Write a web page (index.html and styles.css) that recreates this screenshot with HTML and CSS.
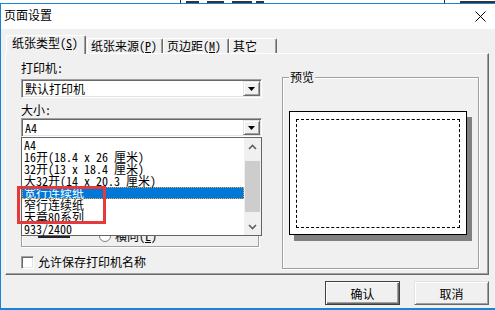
FILE: index.html
```html
<!DOCTYPE html>
<html lang="zh-CN">
<head>
<meta charset="utf-8">
<title>页面设置</title>
<link rel="stylesheet" href="styles.css">
</head>
<body>
<div class="bgstrip">
  <span class="frag f1"></span><span class="frag f2"></span><span class="frag f3"></span><span class="frag f4"></span><span class="frag f5"></span><span class="frag f6"></span><span class="frag f7"></span>
</div>
<div class="window">
  <div class="titlebar">
    <span class="title">页面设置</span>
    <svg class="close" width="11" height="11" viewBox="0 0 11 11"><path d="M0.5 0.5L10.5 10.5M10.5 0.5L0.5 10.5" stroke="#000" stroke-width="1" fill="none"/></svg>
  </div>
  <div class="client">
    <div class="tabs">
      <div class="tab active">纸张类型(<u>S</u>)</div>
      <div class="tab t2">纸张来源(<u>P</u>)</div>
      <div class="tab t3">页边距(<u>M</u>)</div>
      <div class="tab t4">其它</div>
    </div>
    <div class="panel">
      <div class="leftcol">
        <div class="label l1">打印机:</div>
        <div class="combo">
          <span class="combo-text">默认打印机</span>
          <span class="combo-btn"><svg width="7" height="4" viewBox="0 0 7 4"><path d="M0 0H7L3.5 4Z" fill="#000"/></svg></span>
        </div>
        <div class="label l2">大小:</div>
        <div class="combo-wrap">
          <div class="combo">
            <span class="combo-text">A4</span>
            <span class="combo-btn"><svg width="7" height="4" viewBox="0 0 7 4"><path d="M0 0H7L3.5 4Z" fill="#000"/></svg></span>
          </div>
          <div class="droplist">
            <ul class="items">
              <li>A4</li>
              <li>16开(18.4 x 26 厘米)</li>
              <li>32开(13 x 18.4 厘米)</li>
              <li>大32开(14 x 20.3 厘米)</li>
              <li class="sel">宽行连续纸</li>
              <li>窄行连续纸</li>
              <li>天章80系列</li>
              <li>933/2400</li>
            </ul>
            <div class="scrollbar">
              <div class="sb-btn"><svg width="9" height="6" viewBox="0 0 9 6"><path d="M1 5L4.5 1.5L8 5" stroke="#606060" stroke-width="1.6" fill="none"/></svg></div>
              <div class="sb-track"><div class="sb-thumb"></div></div>
              <div class="sb-btn"><svg width="9" height="6" viewBox="0 0 9 6"><path d="M1 1L4.5 4.5L8 1" stroke="#606060" stroke-width="1.6" fill="none"/></svg></div>
            </div>
            <div class="annot"></div>
          </div>
        </div>
        <div class="orient">
          <div class="page-icon"></div>
          <div class="radio-row"><span class="radio"></span><span>横向(<u>L</u>)</span></div>
        </div>
        <div class="check"><span class="box"></span><span>允许保存打印机名称</span></div>
      </div>
      <fieldset class="preview">
        <legend>预览</legend>
        <div class="paper"><div class="margins"></div></div>
      </fieldset>
    </div>
    <div class="buttons">
      <button class="btn default">确认</button>
      <button class="btn">取消</button>
    </div>
  </div>
</div>
</body>
</html>
```

FILE: styles.css
```css
* { box-sizing: border-box; }
html, body { margin: 0; padding: 0; }
body {
  width: 495px;
  height: 310px;
  overflow: hidden;
  background: #fff;
  font-family: "Noto Sans Mono CJK SC", "Noto Sans CJK SC", "DejaVu Sans Mono", monospace;
  font-size: 12px;
  color: #000;
}
u { text-decoration: underline; text-underline-offset: 1px; }

.bgstrip { height: 3px; display: flex; align-items: flex-end; background: #fff; }
.frag { height: 2px; background: #333; }
.f1 { margin-left: 180px; width: 1px; height: 3px; }
.f2 { margin-left: 5px; width: 14px; }
.f3 { margin-left: 8px; width: 18px; }
.f4 { margin-left: 8px; width: 22px; }
.f5 { margin-left: 4px; width: 8px; }
.f6 { margin-left: 180px; width: 1px; height: 3px; }
.f7 { margin-left: 15px; width: 38px; }

.window {
  width: 495px;
  height: 307px;
  border-top: 1px solid #1883d7;
  border-left: 1px solid #1883d7;
  border-bottom: 2px solid #1883d7;
  background: #f0f0f0;
  display: flex;
  flex-direction: column;
}
.titlebar {
  height: 25px;
  flex: none;
  background: #fff;
  display: flex;
  align-items: center;
  justify-content: space-between;
  padding: 0 9px 0 3px;
}
.title {
  font-family: "Noto Sans CJK SC", sans-serif;
  font-size: 12px;
  line-height: 16px;
  margin-top: -3px;
}
.close { display: block; }

.client {
  flex: 1;
  padding: 6px 6px 0 4px;
  display: flex;
  flex-direction: column;
}
.tabs {
  height: 18px;
  display: flex;
  align-items: flex-end;
  padding-left: 1px;
}
.tab {
  height: 15px;
  line-height: 14px;
  padding-left: 3px;
  white-space: nowrap;
  border-top: 1px solid #fff;
  border-left: 1px solid #fff;
  border-right: 1px solid #696969;
  box-shadow: inset -1px 0 0 #a0a0a0;
  border-radius: 2px 2px 0 0;
  background: #f0f0f0;
}
.tab.active {
  width: 80px;
  height: 19px;
  margin-bottom: -1px;
  padding-left: 5px;
  position: relative;
  z-index: 1;
}
.t2 { width: 76px; margin-left: 1px; }
.t3 { width: 66px; }
.t4 { width: 48px; }

.panel {
  width: 484px;
  height: 222px;
  flex: none;
  border-top: 1px solid #fff;
  border-left: 1px solid #fff;
  border-right: 1px solid #696969;
  border-bottom: 1px solid #696969;
  box-shadow: inset -1px -1px 0 #a0a0a0;
  display: flex;
  align-items: flex-start;
  padding: 7px 0 0 15px;
}
.leftcol {
  width: 241px;
  display: flex;
  flex-direction: column;
}
.label { height: 14px; line-height: 14px; }
.l1 { margin-bottom: 4px; }
.l2 { margin-top: 5px; margin-bottom: 1px; }

.combo {
  height: 19px;
  width: 241px;
  background: #fff;
  border-top: 1px solid #a0a0a0;
  border-left: 1px solid #a0a0a0;
  border-right: 1px solid #fff;
  border-bottom: 1px solid #fff;
  box-shadow: inset 1px 1px 0 #696969, inset -1px -1px 0 #e3e3e3;
  display: flex;
  align-items: center;
  justify-content: space-between;
  padding: 1px 1px 1px 3px;
}
.combo-text { line-height: 15px; }
.combo-btn {
  width: 17px;
  height: 15px;
  background: #f0f0f0;
  border-top: 1px solid #e3e3e3;
  border-left: 1px solid #e3e3e3;
  border-right: 1px solid #696969;
  border-bottom: 1px solid #696969;
  box-shadow: inset 1px 1px 0 #fff, inset -1px -1px 0 #a0a0a0;
  display: flex;
  align-items: center;
  justify-content: center;
}
.combo-btn svg { display: block; margin-top: 1px; }

.combo-wrap { position: relative; z-index: 2; }
.droplist {
  position: absolute;
  left: 0;
  top: 100%;
  width: 241px;
  height: 99px;
  border: 1px solid #646464;
  background: #fff;
  display: flex;
}
.items {
  list-style: none;
  margin: 0;
  padding: 1px 0 0 0;
  flex: 1;
}
.items li {
  height: 12px;
  line-height: 12px;
  padding-left: 2px;
  white-space: pre;
}
.items li.sel {
  background: #0078d7;
  color: #fff;
  outline: 1px dotted #f5a040;
  outline-offset: -1px;
}
.scrollbar {
  width: 17px;
  background: #f0f0f0;
  display: flex;
  flex-direction: column;
}
.sb-btn {
  height: 17px;
  display: flex;
  align-items: center;
  justify-content: center;
}
.sb-btn svg { display: block; }
.sb-track { flex: 1; padding: 6px 1px 0 1px; }
.sb-thumb { height: 51px; background: #cdcdcd; }
.annot {
  position: absolute;
  left: -5px;
  top: 48px;
  width: 89px;
  height: 38px;
  border: 3px solid #e5393c;
}

.orient {
  margin-top: 9px;
  height: 101px;
  width: 238px;
  border: 1px solid #a0a0a0;
  box-shadow: inset 1px 1px 0 #fff, 1px 1px 0 #fff;
  display: flex;
  align-items: flex-end;
  padding: 0 0 8px 16px;
}
.page-icon {
  width: 32px;
  height: 40px;
  border-bottom: 2px solid #222;
}
.radio-row {
  display: flex;
  align-items: center;
  margin-left: 29px;
  margin-bottom: -5px;
  line-height: 14px;
  gap: 4px;
}
.radio {
  width: 12px;
  height: 12px;
  border-radius: 50%;
  border: 1px solid #808080;
  background: #fff;
}
.check {
  margin-top: 8px;
  height: 14px;
  line-height: 14px;
  display: flex;
  align-items: center;
  gap: 4px;
}
.box {
  width: 13px;
  height: 13px;
  background: #fff;
  border-top: 1px solid #a0a0a0;
  border-left: 1px solid #a0a0a0;
  border-right: 1px solid #fff;
  border-bottom: 1px solid #fff;
  box-shadow: inset 1px 1px 0 #696969, inset -1px -1px 0 #e3e3e3;
}

.preview {
  margin: 10px 0 0 20px;
  padding: 0;
  width: 197px;
  height: 198px;
  border: 1px solid #a0a0a0;
  box-shadow: inset 1px 1px 0 #fff, 1px 1px 0 #fff;
  min-width: 0;
}
.preview legend {
  margin-left: 6px;
  padding: 0 1px;
  line-height: 12px;
  background: #f0f0f0;
}
.paper {
  margin: 28px 0 0 6px;
  width: 178px;
  height: 124px;
  border: 1px solid #000;
  background: #fff;
  padding: 7px 6px 6px 6px;
  box-shadow: 5px 6px 0 #808080;
}
.margins {
  width: 100%;
  height: 100%;
  border: 1px dashed #000;
}

.buttons {
  margin-top: 6px;
  display: flex;
  justify-content: flex-end;
  gap: 14px;
}
.btn {
  width: 75px;
  height: 24px;
  font: inherit;
  color: #000;
  background: #f0f0f0;
  padding: 0;
  border-top: 1px solid #e3e3e3;
  border-left: 1px solid #e3e3e3;
  border-right: 1px solid #696969;
  border-bottom: 1px solid #696969;
  box-shadow: inset 1px 1px 0 #fff, inset -1px -1px 0 #a0a0a0;
}
.btn.default {
  border: 1px solid #404040;
  box-shadow: inset 1px 1px 0 #fff, inset -1px -1px 0 #696969, inset -2px -2px 0 #a0a0a0;
}
```
